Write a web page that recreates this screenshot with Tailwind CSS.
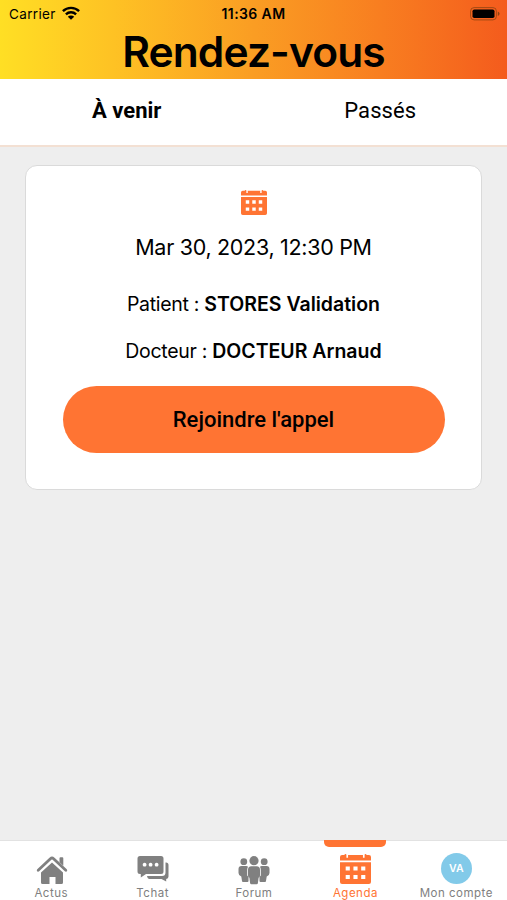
<!DOCTYPE html>
<html lang="fr">
<head>
<meta charset="utf-8">
<title>Rendez-vous</title>
<script src="https://cdn.jsdelivr.net/npm/@tailwindcss/browser@4"></script>
</head>
<body class="w-[507px] h-[900px] flex flex-col overflow-hidden bg-[#eeeeee] text-black font-[Inter,sans-serif]">
<svg class="hidden">
  <symbol id="calendar" viewBox="0 0 30 30">
    <path fill="currentColor" d="M2 1h2.300Q4.300 0 5.300 0T6.200 1v2.700h1.600V1h14.400v2.700h1.600V1q0-1 .9-1t1 1H28q2 0 2 2v3.500H0V3q0-2 2-2z"/>
    <path fill="currentColor" fill-rule="evenodd" d="M0 8.300h30V28q0 2-2 2H2q-2 0-2-2zM5.500 12.400v4h4v-4zm7.500 0v4h4v-4zm7.500 0v4h4v-4zM5.500 21v4h4v-4zm7.500 0v4h4v-4zm7.500 0v4h4v-4z"/>
  </symbol>
</svg>
<header class="h-[79px] shrink-0 bg-linear-to-r from-[#ffdf24] via-[#fa9d23] to-[#f45b1d]">
  <div class="h-[28px] px-[9px] grid grid-cols-3 items-center text-[13.500px] leading-[28px]">
    <div class="flex items-center gap-[6px]">
      <span class="tracking-[0.35px]">Carrier</span>
      <svg class="w-[18px] h-[14px] -mt-[2px]" viewBox="0 0 18 14" fill="none" stroke="#000" stroke-width="2.400"><path d="M.9 5.200a11.600 11.600 0 0 1 16.200 0M3.900 8.300a7.400 7.400 0 0 1 10.200 0"/><path fill="#000" stroke="none" d="M5.800 10.700a4.600 4.600 0 0 1 6.400 0L9 13.800z"/></svg>
    </div>
    <span class="text-center text-[14px] font-semibold tracking-[0.4px]">11:36 AM</span>
    <svg class="justify-self-end w-[30px] h-[14px] -mr-[2px]" viewBox="0 0 30 14"><rect x=".6" y=".6" width="25.800" height="12.300" rx="3.500" fill="none" stroke="#8d4312" stroke-opacity=".8"/><rect x="2.500" y="2.500" width="22" height="8.600" rx="1.800"/><path fill="#8d4312" d="M27.800 4.600q1.800.8 1.800 2.200t-1.800 2.200z"/></svg>
  </div>
  <h1 class="text-center text-[42.500px] leading-[48px] font-semibold tracking-[-0.900px]">Rendez-vous</h1>
</header>
<div class="h-[68px] shrink-0 grid grid-cols-2 bg-white border-b-2 border-[#f3e0d3] text-center font-[Roboto,sans-serif] text-[22px] leading-[64px]">
  <span class="font-bold">À venir</span>
  <span class="tracking-[0.1px]">Passés</span>
</div>
<main class="flex-1 px-[25px] pt-[18px]">
  <section class="h-[325px] bg-white border border-[#dadada] rounded-[12px] flex flex-col items-center pt-[24px] px-[37px]">
    <svg class="w-[26px] h-[25px] text-[#ff7433]" viewBox="0 0 30 30" preserveAspectRatio="none"><use href="#calendar" width="30" height="30"/></svg>
    <p class="mt-[17px] text-[21.500px] leading-[30px] tracking-[-0.300px] whitespace-nowrap">Mar 30, 2023, 12:30 PM</p>
    <p class="mt-[27px] text-[19.500px] leading-[30px] tracking-[-0.300px] whitespace-nowrap">Patient : <b class="font-semibold tracking-normal">STORES Validation</b></p>
    <p class="mt-[17px] text-[19.500px] leading-[30px] tracking-[-0.300px] whitespace-nowrap">Docteur : <b class="font-semibold tracking-normal">DOCTEUR Arnaud</b></p>
    <button class="mt-[20px] w-[382px] h-[67px] rounded-full bg-[#ff7433] font-[Roboto,sans-serif] font-medium text-[22px]">Rejoindre l'appel</button>
  </section>
</main>
<nav class="h-[60px] shrink-0 grid grid-cols-5 bg-white border-t border-[#e2e2e2] text-[#808080] text-[11.500px] leading-[14px] tracking-[0.5px]">
  <a class="flex flex-col items-center pt-[14px]">
    <svg class="w-[32px] h-[31px] ml-[2px]" viewBox="0 0 32 31" fill="none" stroke="currentColor"><path stroke-width="2.800" stroke-linecap="round" stroke-linejoin="round" d="M2.200 15.200 14.400 3.700q1.600-1.400 3.200 0L29.800 15.200"/><path fill="currentColor" stroke="none" d="M23.500 3.200q0-1 1-1h1.800q1 0 1 1v7.500l-3.800-3.500zM16 7.500 27 17.500v10q0 1.500-1.500 1.500h-6v-7h-6v7H6.500Q5 29 5 27.500v-10z"/></svg>
    <span class="ml-px">Actus</span>
  </a>
  <a class="flex flex-col items-center pt-[13px]">
    <svg class="w-[32px] h-[31px] mb-px ml-px" viewBox="0 0 32 31" fill="currentColor"><path fill-rule="evenodd" d="M3 2h21q2.500 0 2.500 2.500v13Q26.500 20 24 20H9l-5.200 3.600V20H3Q.5 20 .5 17.500v-13Q.5 2 3 2zm4.600 6.800a1.900 1.900 0 1 0 .01 0zm6 0a1.900 1.900 0 1 0 .01 0zm6 0a1.900 1.900 0 1 0 .01 0z"/><path d="M28.500 8.500h.5q2.500 0 2.500 2.500v11.500q0 2.300-2.300 2.500v2.500L24.500 25H12.500q-2 0-2.500-3h15q3.500 0 3.500-3.500z"/></svg>
    <span class="ml-px">Tchat</span>
  </a>
  <a class="flex flex-col items-center pt-[14px]">
    <svg class="w-[32px] h-[31px] ml-[2px]" viewBox="0 0 32 31" fill="currentColor"><circle cx="5.800" cy="6.700" r="3.400"/><circle cx="26.200" cy="6.700" r="3.400"/><circle cx="16" cy="5.700" r="4.600"/><path d="M3.500 11h4.700q1.200 0 1.800.8Q9.200 13 9.200 15v5.500l1.300 1.500V26q0 1-1 1H5q-1 0-1-1l-.7-4.500Q.5 20.500.5 18v-4q0-3 3-3zM28.500 11h-4.700q-1.200 0-1.800.8.800 1.200.8 3.200v5.500l-1.300 1.500V26q0 1 1 1H27q1 0 1-1l.7-4.500q2.800-1 2.800-3.500v-4q0-3-3-3zM13.300 11.300h5.400q3.300 0 3.300 3.700v5.500q0 1.500-1.400 2.300l-.7 5.200q-.1 1.200-1.300 1.200h-5.200q-1.200 0-1.300-1.200l-.7-5.200q-1.400-.8-1.400-2.300V15q0-3.700 3.300-3.700z"/></svg>
    <span class="ml-px">Forum</span>
  </a>
  <a class="relative flex flex-col items-center pt-[13px] text-[#ff7433]">
    <span class="absolute -top-px left-1/2 -translate-x-1/2 w-[62px] h-[7px] rounded-b-[5px] bg-[#ff7433]"></span>
    <svg class="w-[31px] h-[30px] mb-[2px] ml-px" viewBox="0 0 30 30" preserveAspectRatio="none"><use href="#calendar" width="30" height="30"/></svg>
    <span class="ml-px">Agenda</span>
  </a>
  <a class="flex flex-col items-center pt-[12px]">
    <span class="w-[31px] h-[31px] mb-[2px] rounded-full bg-[#82cae9] text-white text-[10.500px] leading-[31px] text-center font-semibold tracking-normal">VA</span>
    <span class="whitespace-nowrap">Mon compte</span>
  </a>
</nav>
</body>
</html>
